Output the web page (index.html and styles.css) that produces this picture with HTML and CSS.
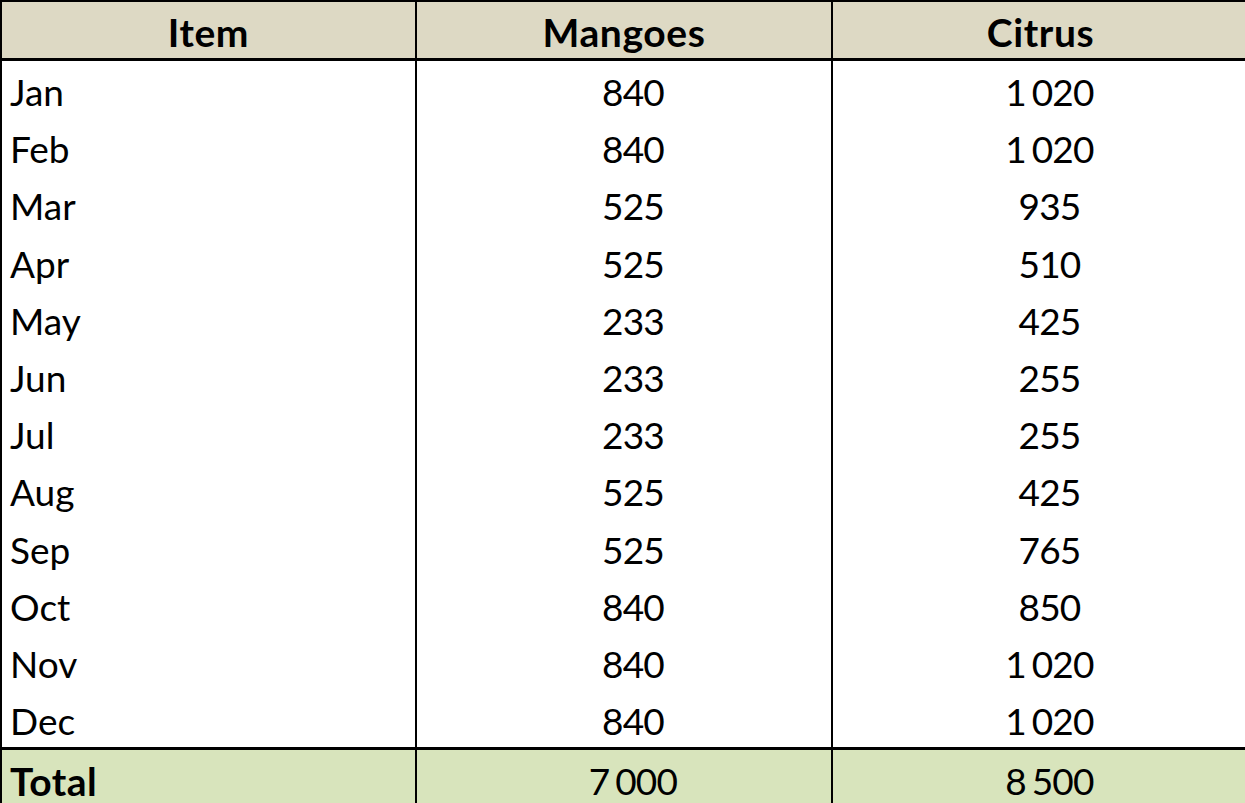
FILE: index.html
```html
<!DOCTYPE html>
<html>
<head>
<meta charset="utf-8">
<link rel="stylesheet" href="styles.css">
</head>
<body>
<table class="sheet">
  <colgroup><col class="c1"><col class="c2"><col class="c3"></colgroup>
  <thead>
    <tr class="head"><th>Item</th><th>Mangoes</th><th>Citrus</th></tr>
  </thead>
  <tbody>
    <tr><td class="lbl">Jan</td><td class="num">840</td><td class="num">1 020</td></tr>
    <tr><td class="lbl">Feb</td><td class="num">840</td><td class="num">1 020</td></tr>
    <tr><td class="lbl">Mar</td><td class="num">525</td><td class="num">935</td></tr>
    <tr><td class="lbl">Apr</td><td class="num">525</td><td class="num">510</td></tr>
    <tr><td class="lbl">May</td><td class="num">233</td><td class="num">425</td></tr>
    <tr><td class="lbl">Jun</td><td class="num">233</td><td class="num">255</td></tr>
    <tr><td class="lbl">Jul</td><td class="num">233</td><td class="num">255</td></tr>
    <tr><td class="lbl">Aug</td><td class="num">525</td><td class="num">425</td></tr>
    <tr><td class="lbl">Sep</td><td class="num">525</td><td class="num">765</td></tr>
    <tr><td class="lbl">Oct</td><td class="num">840</td><td class="num">850</td></tr>
    <tr><td class="lbl">Nov</td><td class="num">840</td><td class="num">1 020</td></tr>
    <tr><td class="lbl">Dec</td><td class="num">840</td><td class="num">1 020</td></tr>
  </tbody>
  <tfoot>
    <tr class="total"><td class="lbl">Total</td><td class="num">7 000</td><td class="num">8 500</td></tr>
  </tfoot>
</table>
</body>
</html>
```
FILE: styles.css
```css
html, body {
  margin: 0;
  padding: 0;
  background: #ffffff;
  overflow: hidden;
}
.sheet {
  border-collapse: collapse;
  table-layout: fixed;
  width: 1248px;
  font-family: Lato, "Open Sans", sans-serif;
  font-size: 37px;
  color: #000;
}
.c1 { width: 415px; }
.c2 { width: 416px; }
.c3 { width: 417px; }
.sheet th, .sheet td {
  padding: 0;
  border-left: 2px solid #000;
  border-right: 2px solid #000;
}
.sheet .head th {
  background: #ddd9c4;
  border-top: 2px solid #000;
  border-bottom: 3px solid #000;
  height: 53px;
  padding-top: 3px;
  font-size: 39px;
  font-weight: 700;
  letter-spacing: 0.6px;
  text-align: center;
  vertical-align: middle;
}
.sheet tbody td {
  height: 53.2px;
  vertical-align: middle;
  padding-top: 4px;
}
.sheet .lbl {
  text-align: left;
  padding-left: 8px;
}
.sheet .num {
  text-align: center;
  padding-left: 18px;
  letter-spacing: -0.8px;
  word-spacing: -3px;
}
.sheet .total td {
  background: #d8e4bc;
  border-top: 3px solid #000;
  height: 55px;
  padding-top: 3px;
  vertical-align: middle;
}
.sheet .total .lbl {
  font-weight: 700;
  font-size: 39px;
  letter-spacing: 0.5px;
}
```
